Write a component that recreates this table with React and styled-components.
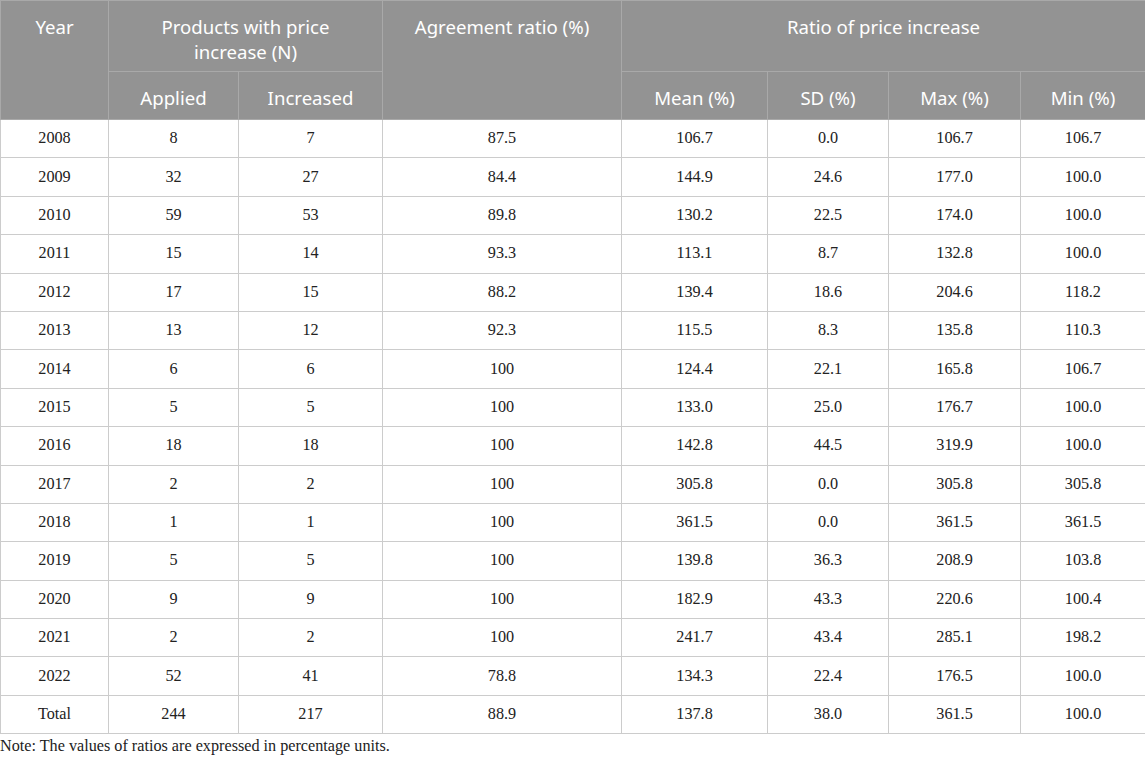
import React from "react";
import styled, { createGlobalStyle } from "styled-components";

const GlobalStyle = createGlobalStyle`
  body {
    margin: 0;
    background: #fff;
  }
`;

const Page = styled.div`
  width: 1145px;
`;

const Table = styled.table`
  width: 1145px;
  border-collapse: collapse;
  table-layout: fixed;
`;

const HeadCell = styled.th`
  background: #939393;
  color: #fff;
  font-family: "Noto Sans", "Open Sans", sans-serif;
  font-weight: 400;
  font-size: 18.6px;
  line-height: 25px;
  text-align: center;
  vertical-align: top;
  padding: 13px 6px 0;
  border: 1px solid #a9a9a9;
  height: ${ (props) => props.h }px;
  box-sizing: border-box;
`;

const Cell = styled.td`
  font-family: "Liberation Serif", "Times New Roman", serif;
  font-size: 16.2px;
  color: #222;
  text-align: center;
  vertical-align: middle;
  border: 1px solid #cccccc;
  height: 38.4px;
  padding: 0 4px;
  box-sizing: border-box;
`;

const Note = styled.p`
  margin: 0;
  padding-top: 3px;
  font-family: "Liberation Serif", "Times New Roman", serif;
  font-size: 16.2px;
  color: #222;
`;

const widths = [108, 130, 144, 239, 146, 121, 132, 125];

const rows = [
  ["2008", "8", "7", "87.5", "106.7", "0.0", "106.7", "106.7"],
  ["2009", "32", "27", "84.4", "144.9", "24.6", "177.0", "100.0"],
  ["2010", "59", "53", "89.8", "130.2", "22.5", "174.0", "100.0"],
  ["2011", "15", "14", "93.3", "113.1", "8.7", "132.8", "100.0"],
  ["2012", "17", "15", "88.2", "139.4", "18.6", "204.6", "118.2"],
  ["2013", "13", "12", "92.3", "115.5", "8.3", "135.8", "110.3"],
  ["2014", "6", "6", "100", "124.4", "22.1", "165.8", "106.7"],
  ["2015", "5", "5", "100", "133.0", "25.0", "176.7", "100.0"],
  ["2016", "18", "18", "100", "142.8", "44.5", "319.9", "100.0"],
  ["2017", "2", "2", "100", "305.8", "0.0", "305.8", "305.8"],
  ["2018", "1", "1", "100", "361.5", "0.0", "361.5", "361.5"],
  ["2019", "5", "5", "100", "139.8", "36.3", "208.9", "103.8"],
  ["2020", "9", "9", "100", "182.9", "43.3", "220.6", "100.4"],
  ["2021", "2", "2", "100", "241.7", "43.4", "285.1", "198.2"],
  ["2022", "52", "41", "78.8", "134.3", "22.4", "176.5", "100.0"],
  ["Total", "244", "217", "88.9", "137.8", "38.0", "361.5", "100.0"],
];

export default function App()
{
  return (
    <Page>
      <GlobalStyle />
      <Table>
        <colgroup>
          {widths.map((w, i) => (
            <col key={i} style={{ width: w }} />
          ))}
        </colgroup>
        <thead>
          <tr>
            <HeadCell rowSpan={2} h={71}>Year</HeadCell>
            <HeadCell colSpan={2} h={71}>
              Products with price
              <br />
              increase (N)
            </HeadCell>
            <HeadCell rowSpan={2} h={71}>Agreement ratio (%)</HeadCell>
            <HeadCell colSpan={4} h={71}>Ratio of price increase</HeadCell>
          </tr>
          <tr>
            <HeadCell h={48}>Applied</HeadCell>
            <HeadCell h={48}>Increased</HeadCell>
            <HeadCell h={48}>Mean (%)</HeadCell>
            <HeadCell h={48}>SD (%)</HeadCell>
            <HeadCell h={48}>Max (%)</HeadCell>
            <HeadCell h={48}>Min (%)</HeadCell>
          </tr>
        </thead>
        <tbody>
          {rows.map((row) => (
            <tr key={row[0]}>
              {row.map((v, i) => (
                <Cell key={i}>{v}</Cell>
              ))}
            </tr>
          ))}
        </tbody>
      </Table>
      <Note>Note: The values of ratios are expressed in percentage units.</Note>
    </Page>
  );
}
